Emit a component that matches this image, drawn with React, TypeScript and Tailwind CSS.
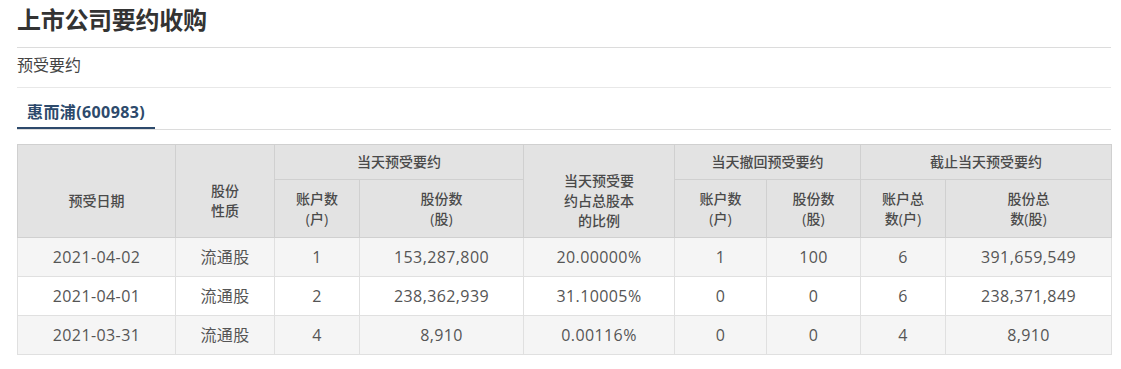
import React from "react";

const rows = [
  ["2021-04-02", "流通股", "1", "153,287,800", "20.00000%", "1", "100", "6", "391,659,549"],
  ["2021-04-01", "流通股", "2", "238,362,939", "31.10005%", "0", "0", "6", "238,371,849"],
  ["2021-03-31", "流通股", "4", "8,910", "0.00116%", "0", "0", "4", "8,910"],
];

const widths = [158, 99, 85, 164, 151, 92, 94, 85, 166];

export default function App() {
  const th = "border border-[#d0d0d0] bg-[#e3e3e3] text-[#4a4a4a] text-[14px] leading-[20px] font-medium text-center align-middle p-0";
  const thSpan = th + " pt-[20px]";
  return (
    <div
      className="bg-white w-[1121px] h-[369px] pl-[17px] pr-[10px] text-[#333]"
      style={{ fontFamily: '"Open Sans", "Noto Sans CJK SC", sans-serif' }}
    >
      <div className="h-[48px] border-b border-[#dcdcdc] pt-[2px]">
        <h1 className="text-[24px] leading-[36px] font-bold text-[#333] tracking-[-0.3px]">上市公司要约收购</h1>
      </div>
      <div className="h-[40px] border-b border-[#e8e8e8]">
        <div className="text-[16px] leading-[34px] text-[#444]">预受要约</div>
      </div>
      <div className="h-[42px] border-b border-[#dcdcdc] flex">
        <div className="h-[41px] border-b-2 border-[#2d4a6c] px-[10px] pt-[9px]">
          <span className="block text-[16px] leading-[30px] font-bold text-[#2d4a6c] tracking-[0.4px]">惠而浦(600983)</span>
        </div>
      </div>
      <table className="mt-[14px] border-collapse table-fixed w-[1094px]">
        <colgroup>
          {widths.map((w, i) => (
            <col key={i} style={{ width: w }} />
          ))}
        </colgroup>
        <thead>
          <tr className="h-[35px]">
            <th rowSpan={2} className={thSpan}>预受日期</th>
            <th rowSpan={2} className={thSpan}>股份<br />性质</th>
            <th colSpan={2} className={th}>当天预受要约</th>
            <th rowSpan={2} className={thSpan}>当天预受要<br />约占总股本<br />的比例</th>
            <th colSpan={2} className={th}>当天撤回预受要约</th>
            <th colSpan={2} className={th}>截止当天预受要约</th>
          </tr>
          <tr className="h-[58px]">
            <th className={th}>账户数<br />(户)</th>
            <th className={th}>股份数<br />(股)</th>
            <th className={th}>账户数<br />(户)</th>
            <th className={th}>股份数<br />(股)</th>
            <th className={th}>账户总<br />数(户)</th>
            <th className={th}>股份总<br />数(股)</th>
          </tr>
        </thead>
        <tbody>
          {rows.map((r, i) => (
            <tr key={i} className={`h-[39px] ${i % 2 === 0 ? "bg-[#f5f5f5]" : "bg-white"}`}>
              {r.map((c, j) => (
                <td
                  key={j}
                  className="border border-[#e0e0e0] text-center align-middle text-[16px] leading-[20px] text-[#555] tracking-[0.4px] p-0"
                >
                  {c}
                </td>
              ))}
            </tr>
          ))}
        </tbody>
      </table>
    </div>
  );
}
